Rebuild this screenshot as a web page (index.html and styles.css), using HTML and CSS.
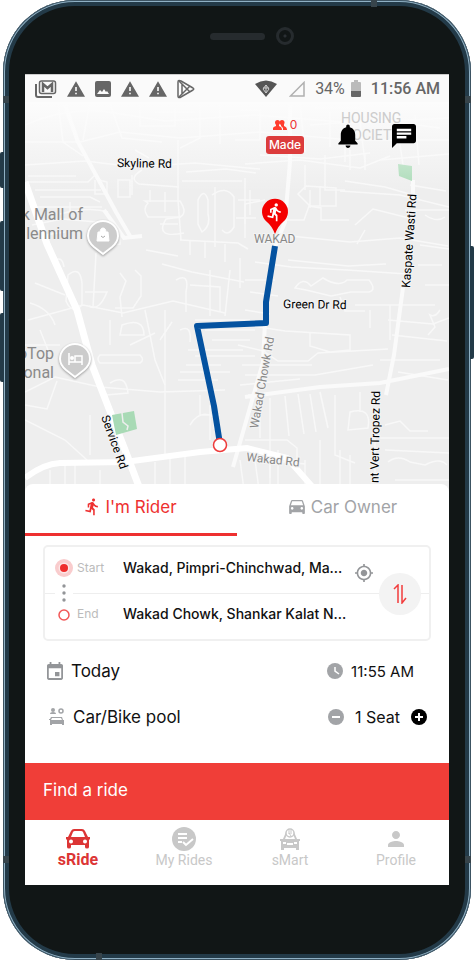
FILE: index.html
```
<!DOCTYPE html>
<html lang="en">

<head>
    <meta charset="UTF-8">
    <meta name="viewport" content="width=device-width, initial-scale=1.0">
    <title>sRide</title>
    <link rel="stylesheet" href="styles.css">
</head>

<body>
    <div class="phone">
        <span class="side-key side-key--mute"></span>
        <span class="side-key side-key--up"></span>
        <span class="side-key side-key--down"></span>
        <span class="side-key side-key--power"></span>
        <span class="antenna antenna--top"></span>
        <span class="antenna antenna--bottom"></span>
        <span class="antenna antenna--left-top"></span>
        <span class="antenna antenna--left-bottom"></span>
        <span class="antenna antenna--right-top"></span>
        <span class="antenna antenna--right-bottom"></span>

        <div class="phone__top">
            <span class="phone__speaker"></span>
            <span class="phone__camera"></span>
        </div>

        <div class="screen">
            <header class="status">
                <div class="status__left">
                    <svg width="22" height="18" viewBox="0 0 22 18" fill="none" stroke="#666">
                        <path d="M1 4v11q0 2 2 2h14" stroke-width="2" />
                        <rect x="4.500" y="1" width="16" height="12.500" rx="2" stroke-width="1.500" />
                        <path d="M8 12V4l4.500 4L17 4v8" stroke-width="2.500" />
                    </svg>
                    <svg width="18" height="16" viewBox="1 2 22 19" fill="#666"><path d="M1 21h22L12 2 1 21zm12-3h-2v-2h2v2zm0-4h-2v-5h2v5z" /></svg>
                    <svg width="16" height="16" viewBox="0 0 16 16"><rect width="16" height="16" rx="2" fill="#666" /><path d="M2 13l3-4 2 2 2-3 2 3 1-1 2 3z" fill="#fafafa" /></svg>
                    <svg width="18" height="16" viewBox="1 2 22 19" fill="#666"><path d="M1 21h22L12 2 1 21zm12-3h-2v-2h2v2zm0-4h-2v-5h2v5z" /></svg>
                    <svg width="18" height="16" viewBox="1 2 22 19" fill="#666"><path d="M1 21h22L12 2 1 21zm12-3h-2v-2h2v2zm0-4h-2v-5h2v5z" /></svg>
                    <svg width="18" height="20" viewBox="0 0 18 20" fill="none" stroke="#666" stroke-width="1.500" stroke-linejoin="round">
                        <path d="M2 1.500q-1 0-1 1.500v14q0 2 2 1.500L16 11q1.500-1 0-2L4 2Q3 1.500 2 1.500z" />
                        <path d="M2 2l11 11M2 18L13 7M5 5v10" />
                    </svg>
                </div>
                <div class="status__right">
                    <svg class="status__wifi" width="22" height="17" viewBox="0 0 22 17">
                        <path d="M0 4Q11-3 22 4L11 17z" fill="#555" />
                        <path d="M11 5l3 4-3 4-3-4zM11 5v8M8 8h6" fill="none" stroke="#ccc" />
                    </svg>
                    <svg class="status__signal" width="16" height="16" viewBox="0 0 16 16" fill="none" stroke="#b0b0b0" stroke-width="1.500"><path d="M15 1.500V15H1.500z" /></svg>
                    <span class="status__percent">34%</span>
                    <svg class="status__battery" width="10" height="17" viewBox="0 0 10 17">
                        <path d="M3 0h4v2h2q1 0 1 1v8H0V3q0-1 1-1h2z" fill="#bbb" />
                        <path d="M0 11h10v5q0 1-1 1H1q-1 0-1-1z" fill="#666" />
                    </svg>
                    <span class="status__time">11:56 AM</span>
                </div>
            </header>

            <section class="map">
                <svg class="map__canvas" viewBox="25 102 424 390" preserveAspectRatio="xMidYMid slice">
                    <defs>
                        <linearGradient id="fade" x1="0" y1="0" x2="0" y2="1">
                            <stop offset="0" stop-color="#fcfcfc" />
                            <stop offset="1" stop-color="#fcfcfc" stop-opacity="0" />
                        </linearGradient>
                    </defs>
                    <rect x="25" y="102" width="424" height="390" fill="#eee" />

                    <!-- lanes -->
                    <g class="lanes">
                        <path d="M25 125q45-20 90-12l50 8 90-6 100 8 94-5M25 142h55l40-10 60 6 80-6 90 8h99M25 165l60-4 50 6 60-4 65 6" />
                        <path d="M58 102l5 40 20 14M90 102l-7 38M110 104l12 34 40 4M140 104v22h35v-18M155 112h40M200 104v34l-20 10M220 104v40M240 110h20v30h-25" />
                        <path d="M28 176h48M28 182h60l8-8M35 190h66M40 197h50l10 5M30 207h72M60 214q30-8 48-2M70 202v18M95 180v14h12v-12l-8-2" />
                        <path d="M118 180v17h12v-17zM132 175v20M142 170q-14 8-3 14l40 3M135 150l14 8M145 201h35q8 12 0 16h-32q-6-8 0-14zM150 190v12M165 192v20" />
                        <path d="M178 140v60l3 40M182 181h60M186 172l40-3 30 4M198 200q6-13 10 0v14q3 12-6 18l-4-8zM212 195q14-10 22 2v30q-6 10-12 3" />
                        <path d="M181 217l-15 2q-12 20 18 14M180 240l58 3 10 6M215 187v60M245 178v60M238 200h22M236 218h20M190 255v-15M205 258v-16M225 262v-18" />
                        <path d="M96 253l-3 55M162 264l30 8 52 10M120 273l6 8-6 16 2 20M135 270l6 6v20l-8 12h-18M176 280q14-8 10 12v20M190 285l30 2v25M210 270v46M230 270l-5 46M195 320h55" />
                        <path d="M52 262q10-8 12 5M35 283l30 12M50 255l14 22M68 275q12-10 14 8v22q-10 10-16-4zM85 292h22q-8 20-18 14M30 303q20 6 25 22" />
                        <path d="M28 320l55-15 40 8 50-12 52 12M25 345h35M110 320v25M122 325q22-8 22 10h-24zM130 345l25-12M145 310l10 50 10 25M100 355h40q5 5 0 8h-40q-4-4 0-8z" />
                        <path d="M25 392l30-15 45 10 60 5 65-2M25 405l22 4 10-28M110 383q16-10 18 10l-22 2M165 310v145M178 380h40M180 372h50M195 356h60M188 350h55M186 365h35M200 395v20h20M190 425q10-16 24-8v12M210 405v35" />
                        <path d="M25 420l40 20 22 20M90 415v40M50 470v25M65 462v30M75 463v29M100 470v22M155 462v30M170 458v34M185 455v35M240 460l4 30M255 460l4 30M270 465v27" />
                        <path d="M300 104l5 48M315 108h45l20 8M310 125l70-5 60 8M330 112v35M345 118v44M360 122l5 40M395 110l8 55M415 115l4 50" />
                        <path d="M245 164l55-4 60 8 30-12M260 155l60 4 50-6M380 160l69-6M350 150v20M365 153v17M305 165v25M325 155v35h20" />
                        <path d="M298 194l8-8 30 2v18h-26zM310 190v18M320 186v20M265 200l-20 4v20M250 190v25M345 181l40 6 28 8M340 191l60 4 49 12M365 230l-8 14M355 225l18-16 40 10" />
                        <path d="M280 220h24l5-14 12 2v12h28M290 236l60 6 50-4 48 8M255 262l36 5 56 3 60 4M288 260l60 6 38-2M295 288q8-12 16-2l12-8q16 10 24 2h22q8 10 0 12h-18l-20 4-25-6z" />
                        <path d="M240 258v30M245 280h30M250 292l28 4M245 310l25 4M340 297l5 14h20M355 305h80M370 310v18M390 305v35M440 310q-5 8-10 5l5 12-7 8" />
                        <path d="M245 325l40 6 65 4v15l-20 2-20-6v-14M238 345l25 6 15 10h30l10-8 70-4M242 365h70M245 375h70l58-10M240 385l60-6M248 395l80-8" />
                        <path d="M260 410v28M270 398v80M285 396l4 40M298 394l6 40M310 394l6 38M320 392l8 36M335 395v60l20 8M350 412q22-6 18 16l-20 2zM360 392v20M375 410v70" />
                        <path d="M245 440h42l10 8v20M265 460l40 4v25M278 450v35M305 460v30M320 440v50M340 450v40M350 455v36M385 425l15-4 10 10h18M380 438h69M385 450l64 3M388 462q10-8 22 0l15 3q15-8 22 0M395 480h54" />
                        <path d="M388 320l45 4 16-6M392 335l55 6M380 360h60M398 372l50 8M405 210h44M410 185l36 6M420 245l29 4M418 265h24M425 285h24M425 215q12 8 20 2" />
                        <path d="M32 225l30-6 35 3M45 235l20-3M100 246l20-2v-12M40 330l8 20M105 222q-6 10 2 14M160 224h18M146 250l32 6M205 330h50M212 340h38M180 330q12-6 10 12M172 322l-12 18" />
                    </g>

                    <!-- main roads -->
                    <g class="roads">
                        <path class="road--thin" d="M64 102l14 40 38 70 14 24M104 210l20 28 18-2M290 102v60l-5 60-10 25" />
                        <path class="road--thin" d="M404 280l-10 75-8 40M245 397l75-10 60-4 69-14M413 180v20M265 322l-2 40-30 105" />
                        <path d="M25 182l22 62 30 66 15 55 35 90 14 37" stroke-width="7" />
                        <path d="M25 478q18-14 35-15l65-1 75-10 47-4 40 10 30 34" stroke-width="6" />
                    </g>
                    <path d="M112 415l22-4 3 18-21 6z" fill="#a8dab5" />
                    <path d="M122 413l1 9 5 4-1 4" fill="none" stroke="#eee" stroke-width="1.500" />
                    <path d="M398 164l14 2v15l-13-5z" fill="#a8dab5" />
                    <rect x="25" y="102" width="424" height="90" fill="url(#fade)" />

                    <g class="place">
                        <text x="83" y="220" text-anchor="end">k Mall of</text>
                        <text x="83" y="239" text-anchor="end">lennium</text>
                        <text x="54" y="359" text-anchor="end">oTop</text>
                        <text x="54" y="378" text-anchor="end">onal</text>
                    </g>
                    <text class="area" x="341" y="123">HOUSING</text>
                    <text class="area" x="344" y="140">SOCIETY</text>
                    <text class="street" x="117" y="167" transform="rotate(1 117 167)">Skyline Rd</text>
                    <text class="street" x="283" y="308" transform="rotate(1 283 308)">Green Dr Rd</text>
                    <text class="street" x="410" y="288" transform="rotate(-86 410 288)">Kaspate Wasti Rd</text>
                    <text class="street" x="380" y="391" text-anchor="end" transform="rotate(-89 380 391)">nt Vert Tropez Rd</text>
                    <text class="street" x="101" y="417" transform="rotate(70 101 417)">Service Rd</text>
                    <text class="street street--grey" x="246" y="461" transform="rotate(6 246 461)">Wakad Rd</text>
                    <text class="street street--grey" x="258" y="429" transform="rotate(-80 258 429)">Wakad Chowk Rd</text>
                    <text class="street street--grey" x="254" y="243">WAKAD</text>

                    <!-- mall and hotel pins -->
                    <g fill="#ccc" stroke="#fff" stroke-width="2">
                        <path class="pin-shadow" d="M103 254l-9-7q-6-5-6-11a15 15 0 0 1 30 0q0 6-6 11z" />
                        <path class="pin-shadow" d="M75 377l-9-7q-6-5-6-11a15 15 0 0 1 30 0q0 6-6 11z" />
                    </g>
                    <path d="M98 232h10l1 9H97zM100 233q0-5 3-5t3 5" fill="#fff" stroke="#fff" />
                    <path d="M101 236q2 3 4 0" fill="none" stroke="#aaa" />
                    <path d="M69 353v12M69 362h13v3M82 362v-6h-7v6" fill="none" stroke="#fff" stroke-width="1.500" />
                    <circle cx="72" cy="358" r="2" fill="#fff" />

                    <!-- route -->
                    <path d="M275 246l-9 56v21l-69 3 17 80 6 38" fill="none" stroke="#0452a0" stroke-width="6" stroke-linejoin="round" />
                    <circle cx="220" cy="445" r="6.500" fill="#fff" stroke="#ee3b3b" stroke-width="1.500" />
                    <path d="M275 234q-3-8-8-12a13 13 0 1 1 16 0q-5 4-8 12z" fill="#f40000" />
                    <svg x="265" y="201" width="20" height="22" viewBox="0 0 24 24" fill="#fff"><path d="M13.490 5.480c1.100 0 2-.9 2-2s-.9-2-2-2-2 .9-2 2 .9 2 2 2zm-3.600 13.900l1-4.400 2.100 2v6h2v-7.500l-2.100-2 .6-3c1.300 1.500 3.300 2.500 5.500 2.500v-2c-1.900 0-3.500-1-4.300-2.400l-1-1.600c-.4-.6-1-1-1.700-1-.3 0-.5.1-.8.1l-5.200 2.200v4.700h2v-3.400l1.800-.7-1.600 8.100-4.900-1-.4 2 7 1.400z" /></svg>
                </svg>

                <div class="map__actions">
                    <div class="match">
                        <span class="match__count">
                            <svg width="14" height="10" viewBox="0 0 14 10" fill="#ff3d2e">
                                <circle cx="4.500" cy="2.500" r="2.500" /><circle cx="9" cy="2.500" r="2.500" />
                                <path d="M0 10V8q0-1 3-2V4h3v2q3 1 3 4zM10 10V8L8 6V4h3v2q3 1 3 4z" />
                            </svg>
                            0
                        </span>
                        <button class="match__btn">Made</button>
                    </div>
                    <button class="icon-btn" aria-label="Notifications">
                        <svg width="20" height="24" viewBox="4 2 16 20"><path d="M12 22c1.100 0 2-.9 2-2h-4c0 1.100.89 2 2 2zm6-6v-5c0-3.070-1.640-5.640-4.500-6.320V4c0-.83-.67-1.500-1.500-1.500s-1.500.67-1.500 1.500v.68C7.630 5.360 6 7.920 6 11v5l-2 2v1h16v-1l-2-2z" /></svg>
                    </button>
                    <button class="icon-btn" aria-label="Messages">
                        <svg width="24" height="24" viewBox="2 2 20 20"><path d="M5 5h14v9H5z" fill="#fff" /><path d="M20 2H4c-1.100 0-1.990.9-1.990 2L2 22l4-4h14c1.100 0 2-.9 2-2V4c0-1.100-.9-2-2-2zM6 9h12v2H6V9zm8 5H6v-2h8v2zm4-6H6V6h12v2z" /></svg>
                    </button>
                </div>
            </section>

            <main class="panel">
                <div class="tabs">
                    <button class="tab tab--active">
                        <svg width="14" height="18" viewBox="3 1 17 23" fill="currentColor"><path d="M13.490 5.480c1.100 0 2-.9 2-2s-.9-2-2-2-2 .9-2 2 .9 2 2 2zm-3.600 13.900l1-4.400 2.100 2v6h2v-7.500l-2.100-2 .6-3c1.300 1.500 3.300 2.500 5.500 2.500v-2c-1.900 0-3.500-1-4.300-2.400l-1-1.600c-.4-.6-1-1-1.700-1-.3 0-.5.1-.8.1l-5.200 2.200v4.700h2v-3.400l1.800-.7-1.600 8.100-4.900-1-.4 2 7 1.400z" /></svg>
                        I'm Rider
                    </button>
                    <button class="tab">
                        <svg width="16" height="14" viewBox="3 5 18 16" fill="currentColor"><path d="M18.920 6.010C18.720 5.420 18.160 5 17.500 5h-11c-.66 0-1.210.42-1.420 1.010L3 12v8c0 .55.45 1 1 1h1c.55 0 1-.45 1-1v-1h12v1c0 .55.45 1 1 1h1c.55 0 1-.45 1-1v-8l-2.080-5.990zM6.500 16c-.83 0-1.500-.67-1.500-1.500S5.670 13 6.500 13s1.500.67 1.500 1.500S7.330 16 6.500 16zm11 0c-.83 0-1.500-.67-1.500-1.500s.67-1.500 1.500-1.500 1.500.67 1.500 1.500-.67 1.500-1.500 1.500zM5 11l1.500-4.500h11L19 11H5z" /></svg>
                        Car Owner
                    </button>
                </div>

                <div class="trip">
                    <div class="trip__row">
                        <svg width="18" height="18" viewBox="0 0 18 18"><circle cx="9" cy="9" r="9" fill="#f9cccd" /><circle cx="9" cy="9" r="5.500" fill="#fff" opacity=".5" /><circle cx="9" cy="9" r="4" fill="#ee2d2d" /></svg>
                        <label class="trip__label" for="start">Start</label>
                        <input class="trip__input" id="start" type="text" value="Wakad, Pimpri-Chinchwad, Ma...">
                        <button class="icon-btn trip__locate" aria-label="Use my location">
                            <svg width="18" height="18" viewBox="1 1 22 22" fill="#939598"><path d="M12 8c-2.210 0-4 1.790-4 4s1.790 4 4 4 4-1.790 4-4-1.790-4-4-4zm8.940 3c-.46-4.170-3.770-7.480-7.940-7.940V1h-2v2.060C6.830 3.520 3.520 6.830 3.060 11H1v2h2.060c.46 4.170 3.770 7.480 7.940 7.940V23h2v-2.060c4.170-.46 7.480-3.770 7.940-7.940H23v-2h-2.060zM12 19c-3.870 0-7-3.130-7-7s3.130-7 7-7 7 3.130 7 7-3.130 7-7 7z" /></svg>
                        </button>
                    </div>
                    <div class="trip__row">
                        <svg width="18" height="18" viewBox="0 0 18 18"><circle cx="9" cy="9" r="5" fill="#fff" stroke="#f25757" stroke-width="1.500" /></svg>
                        <label class="trip__label" for="end">End</label>
                        <input class="trip__input" id="end" type="text" value="Wakad Chowk, Shankar Kalat N...">
                    </div>
                    <svg class="trip__dots" width="18" height="20" viewBox="0 0 18 20" fill="#939598"><circle cx="9" cy="3" r="1.700" /><circle cx="9" cy="10" r="1.700" /><circle cx="9" cy="17" r="1.700" /></svg>
                    <button class="trip__swap" aria-label="Swap start and end">
                        <svg width="14" height="20" viewBox="0 0 14 20" fill="none" stroke="#f23d3d" stroke-width="1.500"><path d="M1 5l4-4v18M9 1v18l4-5" /></svg>
                    </button>
                </div>

                <div class="option">
                    <button class="option__btn">
                        <svg width="16" height="18" viewBox="3 1 18 20" fill="#939598"><path d="M17 12h-5v5h5v-5zM16 1v2H8V1H6v2H5c-1.110 0-1.990.9-1.990 2L3 19c0 1.100.89 2 2 2h14c1.100 0 2-.9 2-2V5c0-1.100-.9-2-2-2h-1V1h-2zm3 18H5V8h14v11z" /></svg>
                        Today
                    </button>
                    <button class="option__btn option__time">
                        <svg width="16" height="16" viewBox="0 0 16 16"><circle cx="8" cy="8" r="8" fill="#a2a4a7" /><path d="M8 4v4l4 3" fill="none" stroke="#fff" stroke-width="1.500" /></svg>
                        11:55 AM
                    </button>
                </div>
                <div class="option">
                    <button class="option__btn">
                        <svg width="18" height="18" viewBox="0 0 18 18" fill="#a2a4a7">
                            <circle cx="6" cy="2" r="2" /><path d="M3 6q0-2 3-2t3 2z" />
                            <circle cx="14" cy="3" r="2" fill="none" stroke="#a2a4a7" stroke-width="1.500" />
                            <path d="M4 9h11l1 3h1v5h-2v-1H5v1H3v-5H2v-1h1zM5 10l-1 2h11l-1-2z" fill-rule="evenodd" />
                        </svg>
                        Car/Bike pool
                    </button>
                    <div class="seats">
                        <button class="icon-btn" aria-label="Fewer seats">
                            <svg width="16" height="16" viewBox="0 0 16 16"><circle cx="8" cy="8" r="8" fill="#a2a4a7" /><path d="M4 8h8" stroke="#fff" stroke-width="2" /></svg>
                        </button>
                        <span class="seats__value">1 Seat</span>
                        <button class="icon-btn" aria-label="More seats">
                            <svg width="16" height="16" viewBox="0 0 16 16"><circle cx="8" cy="8" r="8" /><path d="M4 8h8M8 4v8" stroke="#fff" stroke-width="2" /></svg>
                        </button>
                    </div>
                </div>
            </main>

            <button class="find">Find a ride</button>

            <nav class="nav">
                <a href="#sride" class="nav__link nav__link--active">
                    <svg width="24" height="22" viewBox="0 0 24 22" fill="currentColor" fill-rule="evenodd"><path d="M2 8L5 2q1-2 3-2h8q2 0 3 2l3 6h2v2l-1 1v7q0 1.500-2 1.500t-2-1.500v-2H5v2q0 1.500-2 1.500T1 18v-7L0 10V8zM5 8h14l-2-5q-.5-1-2-1H9Q7.500 2 7 3zM5 10.500a2 2 0 1 0 0 4 2 2 0 0 0 0-4zM19 10.500a2 2 0 1 0 0 4 2 2 0 0 0 0-4z" /></svg>
                    sRide
                </a>
                <a href="#rides" class="nav__link">
                    <svg width="24" height="24" viewBox="0 0 24 24"><circle cx="12" cy="12" r="12" fill="#c8c8c8" /><path d="M6 7h9M6 11h9M6 15h4M11 15l3 3 7-6" fill="none" stroke="#fff" stroke-width="2" /></svg>
                    My Rides
                </a>
                <a href="#smart" class="nav__link">
                    <svg width="20" height="23" viewBox="0 0 20 23" fill="#c8c8c8" fill-rule="evenodd">
                        <path d="M0 11h3l3-7h8l3 7h3v2h-1v9h-3v-2H4v2H1v-9H0zM5 11h10l-2-5H7zM3 14v2h3v-2zM14 14v2h3v-2zM7 15v2h6v-2z" />
                        <circle cx="10" cy="5" r="4" fill="#fff" stroke="#c8c8c8" stroke-width="1.500" />
                        <path d="M8 3h4M8 5h4M9 5l2 3" stroke="#c8c8c8" fill="none" />
                    </svg>
                    sMart
                </a>
                <a href="#profile" class="nav__link">
                    <svg width="16" height="20" viewBox="4 4 16 20" fill="#c8c8c8"><path d="M12 12c2.210 0 4-1.790 4-4s-1.790-4-4-4-4 1.790-4 4 1.790 4 4 4zm0 2c-2.670 0-8 1.340-8 4v2h16v-2c0-2.660-5.330-4-8-4z" /></svg>
                    Profile
                </a>
            </nav>
        </div>
    </div>
</body>

</html>
```
FILE: styles.css
```
:root {
    --ff-primary: 'Inter', sans-serif;
    --ff-system: 'Roboto', sans-serif;
    --clr-red: #f03e38;
    --clr-frame: #233a48;
    --clr-grey: #a2a4a7;
    --clr-light: #c8c8c8;
}

* {
    margin: 0;
    padding: 0;
    box-sizing: border-box;
}

body {
    background: #fff;
    color: #111;
    font-family: var(--ff-primary);
}

button,
input {
    font: inherit;
    color: inherit;
    background: none;
    border: 0;
}

button {
    cursor: pointer;
}

svg {
    display: block;
    flex-shrink: 0;
}

/* device */
.phone {
    position: relative;
    display: flex;
    flex-direction: column;
    min-height: 100vh;
    margin: 0 3px;
    padding: 0 22px 75px;
    border-radius: 72px;
    background: #111616;
    box-shadow: inset 0 0 0 1px #3c5362, inset 0 0 0 2px #8fb0c4, inset 0 0 0 6px var(--clr-frame);
}

.phone__top {
    display: flex;
    align-items: center;
    justify-content: center;
    gap: 11px;
    height: 74px;
    padding: 0 0 2px 30px;
}

.phone__speaker {
    width: 55px;
    height: 7px;
    border-radius: 4px;
    background: #262b2e;
}

.phone__camera {
    width: 18px;
    height: 18px;
    border: 3px solid #262b2e;
    border-radius: 50%;
    background: radial-gradient(#2a2f33 1px, #111616 2px);
}

.side-key {
    position: absolute;
    left: -3px;
    width: 4px;
    background: var(--clr-frame);
}

.side-key--mute {
    top: 152px;
    height: 36px;
    border-radius: 2px 0 0 2px;
}

.side-key--up {
    top: 221px;
    height: 70px;
    border-radius: 2px 0 0 2px;
}

.side-key--down {
    top: 313px;
    height: 69px;
    border-radius: 2px 0 0 2px;
}

.side-key--power {
    left: auto;
    right: -3px;
    top: 246px;
    height: 113px;
    border-radius: 0 2px 2px 0;
}

.antenna {
    position: absolute;
    width: 6px;
    height: 7px;
    background: #37444b;
}

.antenna--top {
    top: 0;
    right: 94px;
}

.antenna--bottom {
    bottom: 0;
    left: 93px;
}

.antenna--left-top,
.antenna--right-top {
    top: 96px;
}

.antenna--left-bottom,
.antenna--right-bottom {
    bottom: 97px;
}

.antenna--left-top,
.antenna--left-bottom {
    left: 0;
}

.antenna--right-top,
.antenna--right-bottom {
    right: 0;
}

.screen {
    flex: 1;
    display: flex;
    flex-direction: column;
    background: #fff;
    overflow: hidden;
}

/* status bar */
.status {
    display: flex;
    align-items: center;
    justify-content: space-between;
    height: 28px;
    padding: 0 9px 0 10px;
    background: #fafafa;
    border-top: 1px solid #ccc;
    color: #666;
    font-family: var(--ff-system);
    font-size: 16px;
    font-weight: 500;
}

.status__left,
.status__right {
    display: flex;
    align-items: center;
}

.status__left {
    gap: 10px;
}

.status__signal {
    margin-left: 12px;
}

.status__percent {
    margin-left: 10px;
    font-weight: 400;
}

.status__battery {
    margin: 0 10px 0 6px;
}

/* map */
.map {
    position: relative;
    flex: 1;
    min-height: 390px;
}

.map__canvas {
    position: absolute;
    width: 100%;
    height: 100%;
    font-family: var(--ff-system);
}

.lanes {
    fill: none;
    stroke: #f8f8f8;
    stroke-width: 1.5px;
}

.roads {
    fill: none;
    stroke: #fff;
}

.road--thin {
    stroke: #fafafa;
    stroke-width: 4px;
}

.street {
    font-size: 12px;
    fill: #000;
    paint-order: stroke;
    stroke: #f4f4f4;
    stroke-width: 2px;
}

.street--grey {
    fill: #888;
}

.place {
    font-size: 16px;
    fill: #8a8a8a;
}

.area {
    font-size: 14px;
    fill: #ccc;
}

.pin-shadow {
    filter: drop-shadow(0 1px 1px #999);
}

.map__actions {
    position: absolute;
    top: 16px;
    right: 33px;
    display: flex;
    align-items: center;
    gap: 34px;
}

.icon-btn {
    display: flex;
}

.match {
    display: flex;
    flex-direction: column;
    align-items: center;
    gap: 4px;
}

.match__count {
    display: flex;
    align-items: center;
    gap: 3px;
    font-size: 12px;
    line-height: 14px;
    color: #e33;
}

.match__btn {
    width: 38px;
    border-radius: 3px;
    background: #dc3c3c;
    color: #fff;
    font-size: 12px;
    font-weight: 500;
    line-height: 18px;
}

/* booking panel */
.panel {
    position: relative;
    margin-top: -8px;
    padding-bottom: 23px;
    border-radius: 8px 8px 0 0;
    background: #fff;
}

.tabs {
    display: flex;
}

.tab {
    flex: 1;
    display: flex;
    align-items: center;
    justify-content: center;
    gap: 6px;
    height: 52px;
    padding-bottom: 3px;
    border-bottom: 3px solid transparent;
    color: var(--clr-grey);
    font-size: 17px;
}

.tab--active {
    border-color: #ee3030;
    color: #ee3030;
}

.trip {
    position: relative;
    margin: 9px 18px 7px;
    border: 2px solid #f0f0f0;
    border-radius: 5px;
}

.trip__row {
    display: flex;
    align-items: center;
    height: 46px;
    padding: 0 56px 4px 10px;
}

.trip__row + .trip__row {
    border-top: 1px solid #eee;
}

.trip__label {
    width: 46px;
    margin-left: 4px;
    padding-bottom: 2px;
    color: #bbb;
    font-size: 12px;
}

.trip__input {
    flex: 1;
    min-width: 0;
    padding-bottom: 2px;
    font-size: 14px;
    font-weight: 500;
    outline: 0;
}

.trip__locate {
    padding-top: 10px;
}

.trip__dots {
    position: absolute;
    top: 36px;
    left: 10px;
    background: #fff;
}

.trip__swap {
    position: absolute;
    top: 26px;
    right: 8px;
    display: flex;
    align-items: center;
    justify-content: center;
    width: 42px;
    height: 42px;
    border-radius: 50%;
    background: #f3f3f3;
}

.option {
    display: flex;
    align-items: center;
    justify-content: space-between;
    height: 46px;
    padding: 0 22px;
    font-size: 17px;
}

.option__btn,
.seats {
    display: flex;
    align-items: center;
    gap: 8px;
}

.option__time {
    padding-right: 13px;
    font-size: 15px;
}

.seats {
    gap: 11px;
    font-size: 16px;
}

/* bottom */
.find {
    height: 57px;
    padding: 0 18px 3px;
    background: var(--clr-red);
    color: #fff;
    font-size: 17px;
    text-align: left;
}

.nav {
    display: flex;
    height: 65px;
    font-family: var(--ff-system);
}

.nav__link {
    flex: 1;
    display: flex;
    flex-direction: column;
    align-items: center;
    justify-content: flex-end;
    padding-bottom: 16px;
    color: var(--clr-light);
    font-size: 14px;
    line-height: 18px;
    text-decoration: none;
}

.nav__link--active {
    color: #dc3535;
    font-size: 16px;
    font-weight: 700;
}
```
